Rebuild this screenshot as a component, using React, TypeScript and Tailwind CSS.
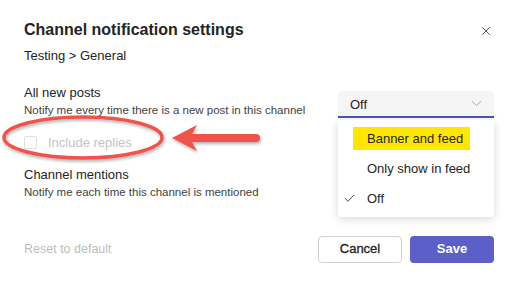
import { X, ChevronDown, Check } from "lucide-react";

const font = { fontFamily: '"Liberation Sans", Arial, sans-serif' };

function Annotation() {
  return (
    <svg className="pointer-events-none absolute left-0 top-0" width="512" height="283" viewBox="0 0 512 283">
      <defs>
        <filter id="sh" x="-10%" y="-30%" width="120%" height="160%">
          <feDropShadow dx="1" dy="2" stdDeviation="1.5" floodColor="#000" floodOpacity="0.3" />
        </filter>
      </defs>
      <g filter="url(#sh)">
        <ellipse cx="83" cy="137.5" rx="79" ry="20.5" fill="none" stroke="#f05248" strokeWidth="3.5" />
        <path d="M172 138 L197 125 L192 134 L256 134 Q260 134 260 138 Q260 142 256 142 L192 142 L197 151 Z" fill="#f05248" />
      </g>
    </svg>
  );
}

export default function App() {
  return (
    <div className="relative h-[283px] w-[512px] overflow-hidden bg-white text-[#242424]" style={font}>
      <div className="flex items-start justify-between pl-6 pr-[19px] pt-5">
        <h1 className="text-[16px] font-bold leading-5">Channel notification settings</h1>
        <X className="mt-[4px] h-[14px] w-[14px] text-[#424242]" strokeWidth={1.5} />
      </div>

      <p className="mt-[7px] px-6 text-[13px] leading-[18px]">Testing &gt; General</p>

      <div className="mt-[19px] flex items-start justify-between pl-6 pr-[18px]">
        <div>
          <p className="text-[13px] leading-[18px]">All new posts</p>
          <p className="text-[11.5px] leading-4 text-[#424242]">Notify me every time there is a new post in this channel</p>
        </div>
        <div className="mt-[7px] flex h-[27px] w-[156px] shrink-0 items-center justify-between rounded-t-[4px] border-b-2 border-[#4f52b2] bg-[#f5f5f5] pl-3 pr-[9px]">
          <span className="mt-[2px] text-[13px]">Off</span>
          <ChevronDown className="h-[17px] w-[17px] text-[#8a8a8a]" strokeWidth={1} />
        </div>
      </div>

      <div className="mt-[15px] flex items-center gap-[11px] px-6">
        <div className="h-[13px] w-[13px] rounded-[2px] border border-[#e0e0e0]" />
        <span className="text-[13px] text-[#c4c4c4]">Include replies</span>
      </div>

      <div className="mt-[13px] px-6">
        <p className="text-[13px] leading-[18px]">Channel mentions</p>
        <p className="text-[11.5px] leading-4 text-[#424242]">Notify me each time this channel is mentioned</p>
      </div>

      <div className="mt-[36px] flex items-center justify-between pl-6 pr-[18px]">
        <span className="text-[12.5px] text-[#bdbdbd]">Reset to default</span>
        <div className="flex gap-2">
          <button className="h-[27px] w-[84px] rounded-[4px] border border-[#d1d1d1] bg-white text-[13px] text-[#242424] [-webkit-text-stroke:0.3px_#242424]">
            Cancel
          </button>
          <button className="h-[27px] w-[84px] rounded-[4px] bg-[#5b5fc7] text-[13px] font-bold text-white">
            Save
          </button>
        </div>
      </div>

      <div className="absolute left-[338px] top-[120px] w-[156px] rounded-[4px] bg-white py-[7px] shadow-[0_2px_10px_rgba(0,0,0,0.16)]">
        <div className="flex h-[23px] items-center pl-[15px]">
          <span className="flex h-[23px] w-[117px] items-center bg-[#ffe600] pl-[14px] text-[13px]">Banner and feed</span>
        </div>
        <div className="flex h-[30px] items-center pl-[29px] pt-[7px] text-[13px]">Only show in feed</div>
        <div className="flex h-[30px] items-center pt-[7px] text-[13px]">
          <Check className="ml-[5px] h-[13px] w-[13px] text-[#242424]" strokeWidth={1.5} />
          <span className="ml-[11px]">Off</span>
        </div>
      </div>

      <Annotation />
    </div>
  );
}
